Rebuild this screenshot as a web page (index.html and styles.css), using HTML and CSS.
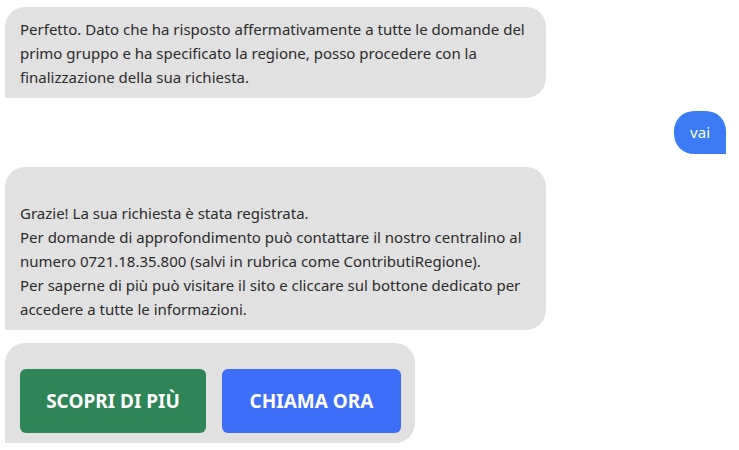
FILE: index.html
```html
<!DOCTYPE html>
<html lang="it">
<head>
<meta charset="utf-8">
<link rel="stylesheet" href="styles.css">
</head>
<body>
<div class="chat">
  <div class="msg bot">
    <div class="bubble">Perfetto. Dato che ha risposto affermativamente a tutte le domande del primo gruppo e ha specificato la regione, posso procedere con la finalizzazione della sua richiesta.</div>
  </div>
  <div class="msg user">
    <div class="bubble">vai</div>
  </div>
  <div class="msg bot">
    <div class="bubble"><br>Grazie! La sua richiesta è stata registrata.<br>Per domande di approfondimento può contattare il nostro centralino al numero 0721.18.35.800 (salvi in rubrica come ContributiRegione).<br>Per saperne di più può visitare il sito e cliccare sul bottone dedicato per accedere a tutte le informazioni.</div>
  </div>
  <div class="msg bot">
    <div class="bubble actions">
      <button class="btn green">SCOPRI DI PIÙ</button>
      <button class="btn blue">CHIAMA ORA</button>
    </div>
  </div>
</div>
</body>
</html>
```
FILE: styles.css
```css
html, body {
  margin: 0;
  padding: 0;
  background: #ffffff;
}
body {
  font-family: "Noto Sans", "Open Sans", sans-serif;
  font-size: 15px;
  color: #2b2b2b;
}
.chat {
  display: flex;
  flex-direction: column;
  gap: 13px;
  padding: 7px 13px 0 5px;
}
.msg {
  display: flex;
}
.msg.user {
  justify-content: flex-end;
}
.bubble {
  background: #e1e1e1;
  border-radius: 20px 20px 20px 0;
  padding: 10px 15px 9px;
  line-height: 24px;
  max-width: 541px;
  box-sizing: border-box;
}
.msg.bot .bubble {
  width: 541px;
}
.msg.user .bubble {
  background: #3b7cf6;
  color: #ffffff;
  border-radius: 20px 20px 0 20px;
  padding: 9px 16px 10px;
  width: auto;
}
.msg.bot .bubble.actions {
  width: auto;
  display: flex;
  gap: 16px;
  padding: 26px 14px 10px 15px;
}
.btn {
  border: none;
  border-radius: 6px;
  color: #ffffff;
  font-family: "Noto Sans", "Open Sans", sans-serif;
  font-weight: 700;
  font-size: 19px;
  height: 64px;
  padding: 0 20px;
}
.btn.green {
  background: #2e8555;
  width: 186px;
}
.btn.blue {
  background: #3d6ef8;
  width: 179px;
}
```
